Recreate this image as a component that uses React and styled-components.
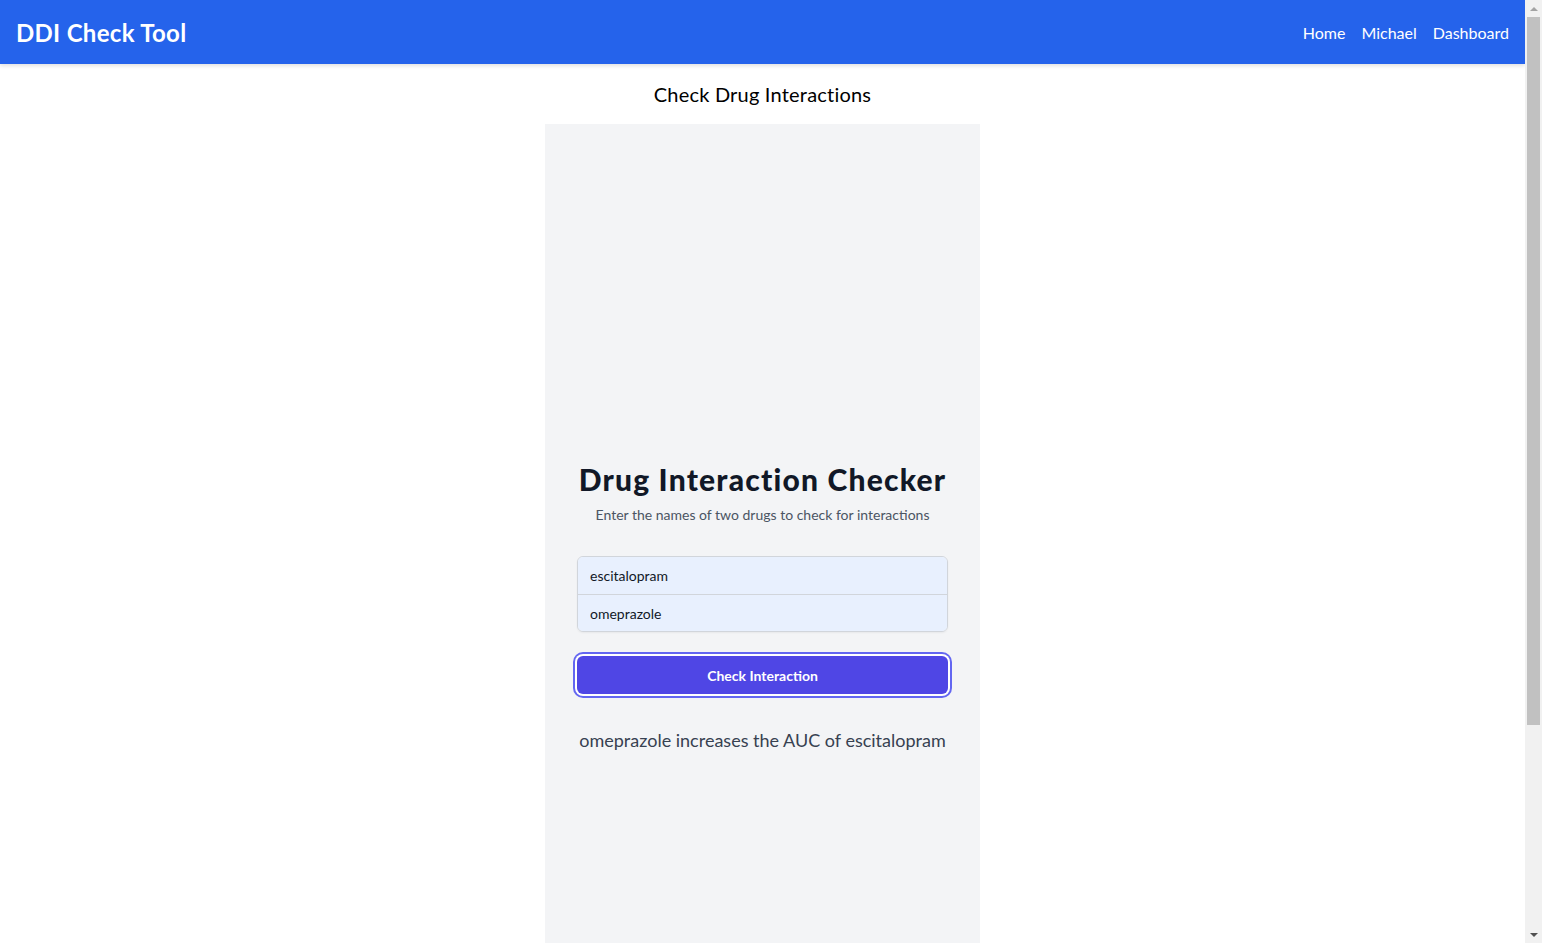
import React from "react";
import styled, { createGlobalStyle } from "styled-components";

const GlobalStyle = createGlobalStyle`
  * { box-sizing: border-box; }
  body {
    margin: 0 17px 0 0;
    font-family: Lato, "Noto Sans", sans-serif;
    background: #ffffff;
    color: #000;
  }
  ::-webkit-scrollbar { display: none; }
`;

const Navbar = styled.nav`
  height: 64px;
  background: #2563eb;
  display: flex;
  align-items: center;
  justify-content: space-between;
  padding: 0 16px;
  box-shadow: 0 2px 4px rgba(0, 0, 0, 0.12);
  position: relative;
`;

const Logo = styled.div`
  color: #fff;
  font-size: 24px;
  font-weight: 700;
  letter-spacing: 0.3px;
`;

const NavLinks = styled.div`
  display: flex;
  gap: 16px;
`;

const NavLink = styled.a`
  color: #fff;
  font-size: 16px;
  text-decoration: none;
`;

const PageTitle = styled.h2`
  margin: 16px 0 16px;
  text-align: center;
  font-size: 20px;
  line-height: 28px;
  font-weight: 400;
  letter-spacing: 0.2px;
`;

const Panel = styled.main`
  width: 435px;
  margin: 0 auto;
  background: #f3f4f6;
  padding: 12px 32px 132px;
`;

const Centered = styled.div`
  min-height: 943px;
  display: flex;
  flex-direction: column;
  justify-content: center;
`;

const Heading = styled.h1`
  margin: 0;
  text-align: center;
  font-size: 30px;
  line-height: 36px;
  font-weight: 900;
  letter-spacing: 1.2px;
  color: #111827;
`;

const Subtitle = styled.p`
  margin: 8px 0 0;
  text-align: center;
  font-size: 14px;
  line-height: 20px;
  color: #4b5563;
`;

const InputGroup = styled.div`
  margin-top: 31px;
  border: 1px solid #d1d5db;
  border-radius: 6px;
  overflow: hidden;
  box-shadow: 0 1px 2px rgba(0, 0, 0, 0.05);
`;

const Field = styled.input`
  display: block;
  width: 100%;
  height: 37px;
  border: none;
  border-top: ${(p) => (p.$first ? "none" : "1px solid #d1d5db")};
  background: #e8f0fe;
  padding: 0 12px;
  font-family: inherit;
  font-size: 14px;
  color: #111827;
  outline: none;
`;

const Button = styled.button`
  margin-top: 24px;
  width: 100%;
  height: 38px;
  border: none;
  border-radius: 6px;
  background: #4f46e5;
  color: #fff;
  font-family: inherit;
  font-size: 14px;
  font-weight: 700;
  box-shadow: 0 0 0 2px #fff, 0 0 0 4px #6366f1;
  cursor: pointer;
`;

const Result = styled.p`
  margin: 32px 0 0;
  text-align: center;
  font-size: 18px;
  line-height: 28px;
  color: #374151;
`;

/* fake classic scrollbar that sits over the right edge */
const Scrollbar = styled.div`
  position: fixed;
  top: 0;
  right: 0;
  width: 17px;
  height: 100vh;
  background: #f1f1f1;
  display: flex;
  flex-direction: column;
  z-index: 10;
`;

const Arrow = styled.div`
  height: 17px;
  flex: none;
  display: flex;
  align-items: center;
  justify-content: center;

  &::before {
    content: "";
    width: 0;
    height: 0;
    border-left: 4px solid transparent;
    border-right: 4px solid transparent;
    ${(p) =>
      p.$down
        ? "border-top: 4px solid #505050;"
        : "border-bottom: 4px solid #a3a3a3;"}
  }
`;

const Track = styled.div`
  flex: 1;
  padding: 0 2px;
`;

const Thumb = styled.div`
  height: 708px;
  background: #c1c1c1;
`;

export default function App() {
  return (
    <>
      <GlobalStyle />
      <Navbar>
        <Logo>DDI Check Tool</Logo>
        <NavLinks>
          <NavLink href="#">Home</NavLink>
          <NavLink href="#">Michael</NavLink>
          <NavLink href="#">Dashboard</NavLink>
        </NavLinks>
      </Navbar>
      <PageTitle>Check Drug Interactions</PageTitle>
      <Panel>
        <Centered>
          <Heading>Drug Interaction Checker</Heading>
          <Subtitle>Enter the names of two drugs to check for interactions</Subtitle>
          <InputGroup>
            <Field $first defaultValue="escitalopram" />
            <Field defaultValue="omeprazole" />
          </InputGroup>
          <Button>Check Interaction</Button>
          <Result>omeprazole increases the AUC of escitalopram</Result>
        </Centered>
      </Panel>
      <Scrollbar>
        <Arrow />
        <Track>
          <Thumb />
        </Track>
        <Arrow $down />
      </Scrollbar>
    </>
  );
}
